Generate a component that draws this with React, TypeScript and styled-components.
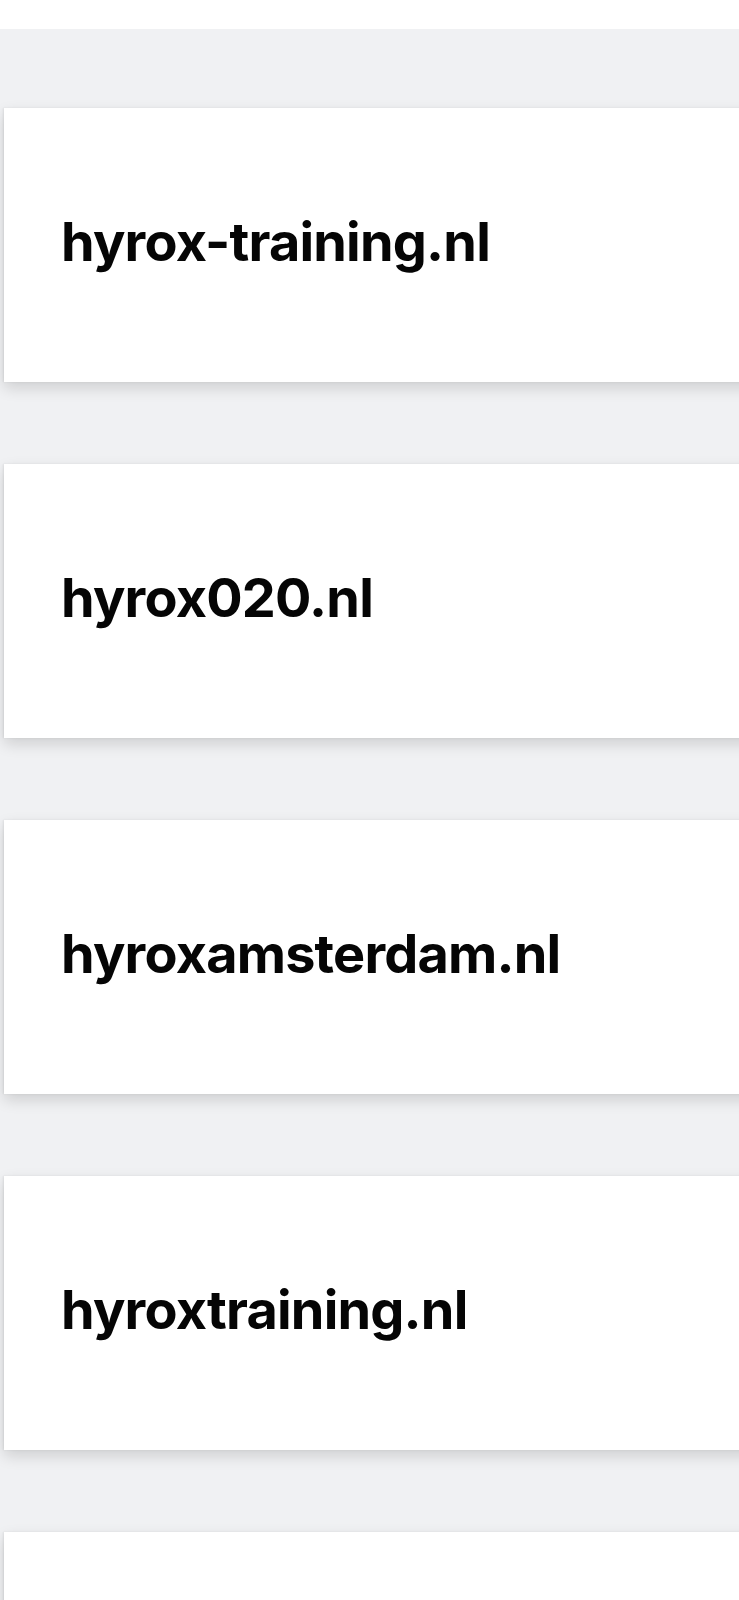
import React from "react";
import styled, { createGlobalStyle } from "styled-components";

const Global = createGlobalStyle`
  html, body { margin: 0; padding: 0; }
  body { background: #f0f1f3; font-family: "Inter", "Liberation Sans", sans-serif; overflow: hidden; }
`;

const Page = styled.div`
  width: 739px;
  height: 1600px;
  overflow: hidden;
  background: #f0f1f3;
  display: flex;
  flex-direction: column;
`;

const TopBar = styled.div`
  height: 29px;
  background: #ffffff;
  flex-shrink: 0;
`;

const List = styled.div`
  display: flex;
  flex-direction: column;
  gap: 82px;
  padding: 79px 0 0 4px;
`;

const Card = styled.div`
  height: 274px;
  width: 760px;
  background: #ffffff;
  display: flex;
  align-items: center;
  padding-left: 57px;
  box-sizing: border-box;
  flex-shrink: 0;
  box-shadow: 0 6px 14px rgba(0, 0, 0, 0.14), -1px 0 2px rgba(0, 0, 0, 0.07);
`;

const Domain = styled.span`
  font-family: "Inter", "Liberation Sans", sans-serif;
  font-weight: 700;
  font-size: 54px;
  color: #050505;
  letter-spacing: -0.8px;
  line-height: 1;
  margin-top: -6px;
`;

const domains = ["hyrox-training.nl", "hyrox020.nl", "hyroxamsterdam.nl", "hyroxtraining.nl", ""];

export default function App() {
  return (
    <>
      <Global />
      <Page>
        <TopBar />
        <List>
          {domains.map((d, i) => (
            <Card key={i}>{d && <Domain>{d}</Domain>}</Card>
          ))}
        </List>
      </Page>
    </>
  );
}
